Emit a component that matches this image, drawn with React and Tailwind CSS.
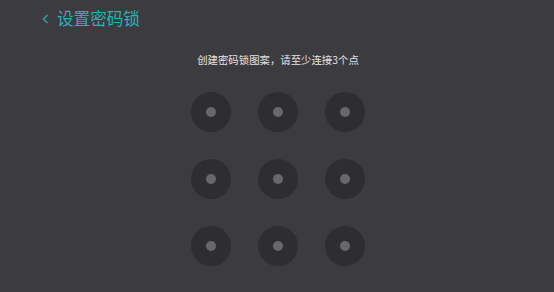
import React from 'react';

const dots = [0, 1, 2, 3, 4, 5, 6, 7, 8];

export default function App() {
  return (
    <div
      className="w-[554px] h-[292px] bg-[#3c3b40] overflow-hidden"
      style={{ fontFamily: '"Noto Sans CJK SC", "Liberation Sans", sans-serif' }}
    >
      <div className="flex items-center h-[36px] pl-[41px] pt-[1px]">
        <svg width="10" height="12" viewBox="0 0 10 12" className="mr-[6px]">
          <path d="M6.5 2 L2.5 6 L6.5 10" fill="none" stroke="#2fa9ad" strokeWidth="1.4" />
        </svg>
        <span className="text-[16.6px] leading-none text-[#2db0b4]">设置密码锁</span>
      </div>
      <div className="text-center text-[10.4px] leading-none text-[#e4e4e6] mt-[19px] pl-[2px]">
        创建密码锁图案，请至少连接3个点
      </div>
      <div className="grid grid-cols-[40px_40px_40px] gap-x-[27px] gap-y-[27px] w-fit mx-auto mt-[27px] pl-[1px]">
        {dots.map((d) => (
          <div key={d} className="w-[40px] h-[40px] rounded-full bg-[#2e2d32] flex items-center justify-center">
            <div className="w-[10px] h-[10px] rounded-full bg-[#68676c]" />
          </div>
        ))}
      </div>
    </div>
  );
}
